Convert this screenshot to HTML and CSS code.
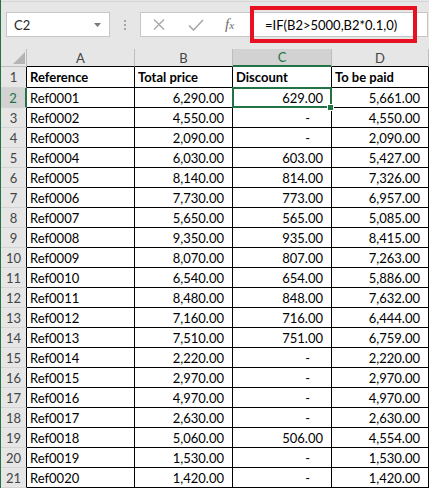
FILE: index.html
```html
<!DOCTYPE html>
<html lang="en">
<head>
  <meta charset="UTF-8" />
  <title>Discount sheet</title>
  <link rel="stylesheet" href="styles.css">
</head>
<body>
  <div class="window">
    <div class="formula-bar">
      <div class="name-box">
        <span>C2</span>
        <svg class="name-arrow" width="7" height="4" viewBox="0 0 7 4"><path d="M0 0h7L3.5 4z" fill="#7a7a7a"/></svg>
      </div>
      <div class="grip"><i></i><i></i><i></i></div>
      <div class="formula-box">
        <svg class="fb-cancel" width="12" height="11" viewBox="0 0 12 11">
          <path d="M1 0.5l10 10M11 0.5l-10 10" stroke="#a8a8a8" stroke-width="1.4" fill="none"/>
        </svg>
        <svg class="fb-enter" width="16" height="12" viewBox="0 0 16 12">
          <path d="M1 6.5l4.5 4.5L15 1" stroke="#a8a8a8" stroke-width="1.6" fill="none"/>
        </svg>
        <span class="fx">f<small>x</small></span>
        <span class="formula">=IF(B2&gt;5000,B2*0.1,0)</span>
        <span class="highlight"></span>
      </div>
    </div>

    <div class="sheet" id="sheet">
      <div class="corner"><span class="select-all"></span></div>
      <div class="col-head">A</div>
      <div class="col-head">B</div>
      <div class="col-head sel">C</div>
      <div class="col-head">D</div>

      <div class="row-head">1</div>
      <div class="cell bold">Reference</div>
      <div class="cell bold">Total price</div>
      <div class="cell bold">Discount</div>
      <div class="cell bold">To be paid</div>
    </div>
  </div>

  <script>
    const rows = [
      ["Ref0001", 6290], ["Ref0002", 4550], ["Ref0003", 2090], ["Ref0004", 6030],
      ["Ref0005", 8140], ["Ref0006", 7730], ["Ref0007", 5650], ["Ref0008", 9350],
      ["Ref0009", 8070], ["Ref0010", 6540], ["Ref0011", 8480], ["Ref0012", 7160],
      ["Ref0013", 7510], ["Ref0014", 2220], ["Ref0015", 2970], ["Ref0016", 4970],
      ["Ref0017", 2630], ["Ref0018", 5060], ["Ref0019", 1530], ["Ref0020", 1420]
    ];

    function money(n) {
      return n.toLocaleString("en-US", { minimumFractionDigits: 2, maximumFractionDigits: 2 });
    }

    const sheet = document.getElementById("sheet");
    let html = "";
    rows.forEach((row, i) => {
      const total = row[1];
      const discount = total > 5000 ? total * 0.1 : 0;
      const first = i === 0;
      html += `
        <div class="row-head${first ? " sel" : ""}">${i + 2}</div>
        <div class="cell">${row[0]}</div>
        <div class="cell num">${money(total)}</div>
        <div class="cell num${discount ? "" : " dash"}${first ? " active" : ""}">${discount ? money(discount) : "-"}</div>
        <div class="cell num">${money(total - discount)}</div>`;
    });
    sheet.insertAdjacentHTML("beforeend", html);
  </script>
</body>
</html>
```

FILE: styles.css
```css
body {
  margin: 0;
  background: #e6e6e6;
  font-family: Lato, "Open Sans", sans-serif;
}

.window {
  width: 429px;
  height: 488px;
  box-sizing: border-box;
  border-left: 1px solid #217346;
  background: #e6e6e6;
  overflow: hidden;
}

/* formula bar */
.formula-bar {
  display: flex;
  align-items: flex-start;
  height: 48px;
  box-sizing: border-box;
  margin-top: 1px;
  border-top: 1px solid #d4d4d4;
  padding: 10px 0 0 5px;
}

.name-box {
  width: 104px;
  height: 25px;
  box-sizing: border-box;
  display: flex;
  align-items: center;
  justify-content: space-between;
  padding: 0 8px 0 7px;
  background: #fff;
  border: 1px solid #c6c6c6;
  font-size: 13px;
  color: #262626;
}

.grip {
  width: 30px;
  height: 25px;
  display: flex;
  flex-direction: column;
  align-items: center;
  justify-content: center;
  gap: 2px;
}

.grip i {
  width: 2px;
  height: 2px;
  background: #a6a6a6;
}

.formula-box {
  position: relative;
  width: 288px;
  height: 25px;
  box-sizing: border-box;
  display: flex;
  align-items: center;
  background: #fff;
  border: 1px solid #c6c6c6;
}

.fb-cancel { margin-left: 12px; }
.fb-enter { margin-left: 23px; }

.fx {
  margin-left: 21px;
  width: 13px;
  font-family: "Liberation Serif", serif;
  font-style: italic;
  font-size: 15px;
  color: #6d6d6d;
}

.fx small {
  font-size: 11px;
}

.formula {
  margin-left: 27px;
  font-size: 13px;
  color: #000;
}

.highlight {
  position: absolute;
  left: 109px;
  top: -7px;
  width: 167px;
  height: 37px;
  box-sizing: border-box;
  border: 4px solid #e81123;
}

/* grid */
.sheet {
  display: grid;
  grid-template-columns: 26px 108px 98px 99px 97px;
  grid-template-rows: 18px 21px;
  grid-auto-rows: 20px;
  background: #fff;
  font-size: 13px;
}

.sheet > div {
  box-sizing: border-box;
  display: flex;
  align-items: center;
  white-space: nowrap;
  overflow: hidden;
}

.corner {
  justify-content: flex-end;
  align-items: flex-end !important;
  padding: 0 1px 2px 0;
  background: #e6e6e6;
  border-right: 1px solid #bdbdbd;
  border-bottom: 1px solid #bdbdbd;
}

.select-all {
  width: 12px;
  height: 12px;
  background: #b4b4b4;
  clip-path: polygon(100% 0, 100% 100%, 0 100%);
}

.col-head {
  justify-content: center;
  background: #e6e6e6;
  color: #444;
  border-right: 1px solid #bdbdbd;
  border-bottom: 1px solid #000;
}

.row-head {
  justify-content: center;
  background: #e6e6e6;
  color: #444;
  border-right: 1px solid #000;
  border-bottom: 1px solid #d4d4d4;
}

.col-head.sel {
  background: #d2d2d2;
  color: #217346;
  border-bottom: 2px solid #217346;
}

.row-head.sel {
  background: #d2d2d2;
  color: #217346;
  border-right: 2px solid #217346;
}

.cell {
  padding: 0 3px;
  color: #000;
  border-right: 1px solid #000;
  border-bottom: 1px solid #000;
}

.bold { font-weight: 700; }

.num {
  justify-content: flex-end;
  padding-right: 8px;
}

.num.dash { padding-right: 21px; }

.cell.active { position: relative; overflow: visible !important; }

.cell.active::before {
  content: "";
  position: absolute;
  left: -1px;
  top: -1px;
  right: -1px;
  bottom: -1px;
  border: 2px solid #217346;
}

.cell.active::after {
  content: "";
  position: absolute;
  left: 94px;
  top: 16px;
  width: 5px;
  height: 5px;
  background: #217346;
  border: 1px solid #fff;
}
```
